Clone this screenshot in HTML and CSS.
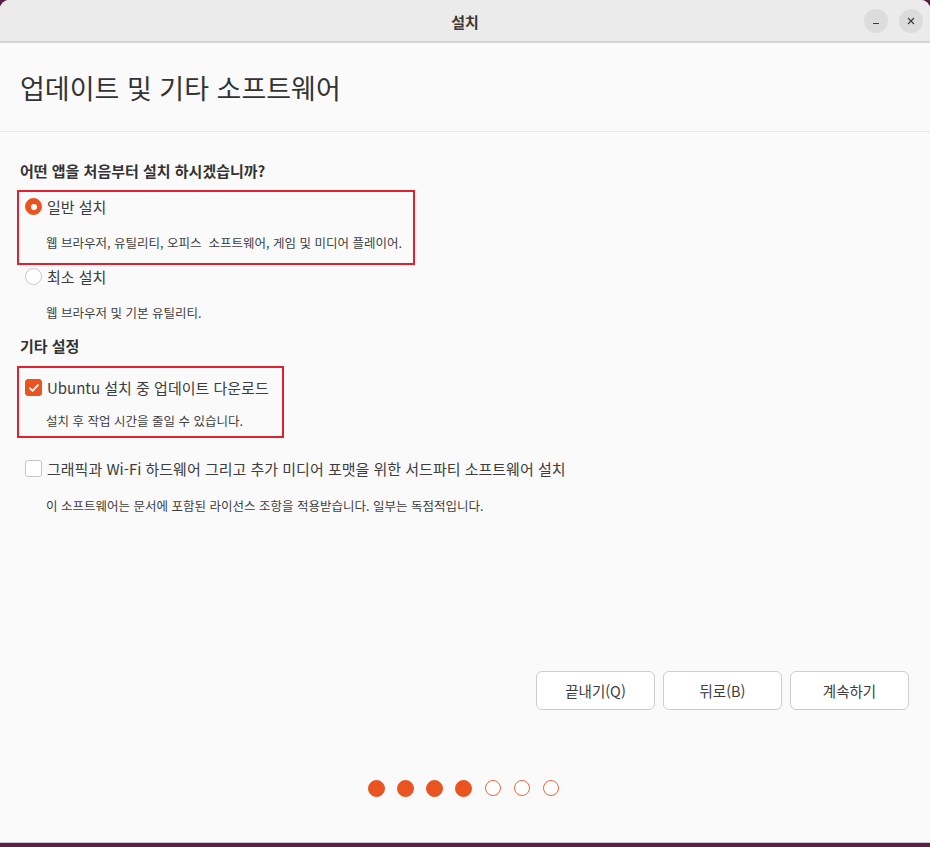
FILE: index.html
```html
<!DOCTYPE html>
<html lang="ko">
<head>
<meta charset="utf-8">
<link rel="stylesheet" href="styles.css">
</head>
<body>
<div class="window">
  <header class="titlebar">
    <span class="title">설치</span>
    <div class="wbtns">
      <span class="wbtn"><svg width="10" height="10" viewBox="0 0 10 10"><path d="M2 7.5h6" stroke="#3d3d3d" stroke-width="1.2"/></svg></span>
      <span class="wbtn"><svg width="10" height="10" viewBox="0 0 10 10"><path d="M2 2l6 6M8 2l-6 6" stroke="#3d3d3d" stroke-width="1.2"/></svg></span>
    </div>
  </header>
  <div class="heading"><h1>업데이트 및 기타 소프트웨어</h1></div>
  <main class="content">
    <h2 class="section first">어떤 앱을 처음부터 설치 하시겠습니까?</h2>
    <div class="option hl hl1">
      <div class="row"><span class="radio on"></span><span class="label">일반 설치</span></div>
      <p class="desc">웹 브라우저, 유틸리티, 오피스&nbsp; 소프트웨어, 게임 및 미디어 플레이어.</p>
    </div>
    <div class="option opt2">
      <div class="row"><span class="radio"></span><span class="label">최소 설치</span></div>
      <p class="desc">웹 브라우저 및 기본 유틸리티.</p>
    </div>
    <h2 class="section second">기타 설정</h2>
    <div class="option hl hl2">
      <div class="row"><span class="check on"><svg width="12" height="12" viewBox="0 0 12 12"><path d="M2 6.3l2.6 2.6L10 3.2" fill="none" stroke="#fff" stroke-width="1.9" stroke-linecap="round" stroke-linejoin="round"/></svg></span><span class="label">Ubuntu 설치 중 업데이트 다운로드</span></div>
      <p class="desc">설치 후 작업 시간을 줄일 수 있습니다.</p>
    </div>
    <div class="option opt4">
      <div class="row"><span class="check"></span><span class="label">그래픽과 Wi-Fi 하드웨어 그리고 추가 미디어 포맷을 위한 서드파티 소프트웨어 설치</span></div>
      <p class="desc">이 소프트웨어는 문서에 포함된 라이선스 조항을 적용받습니다. 일부는 독점적입니다.</p>
    </div>
  </main>
  <div class="actions">
    <button class="btn">끝내기(Q)</button>
    <button class="btn">뒤로(B)</button>
    <button class="btn">계속하기</button>
  </div>
  <div class="dots">
    <span class="dot full"></span><span class="dot full"></span><span class="dot full"></span><span class="dot full"></span><span class="dot"></span><span class="dot"></span><span class="dot"></span>
  </div>
</div>
<div class="desktop-strip"></div>
</body>
</html>
```
FILE: styles.css
```css
html, body {
  margin: 0;
  padding: 0;
  background: #5a1d44;
  width: 930px;
  height: 847px;
  overflow: hidden;
  font-family: "Noto Sans CJK KR", "Noto Sans", sans-serif;
  color: #3d3d3d;
}
.window {
  width: 930px;
  height: 842px;
  background: #fafafa;
  border-radius: 9px 9px 0 0;
  display: flex;
  flex-direction: column;
  border-bottom: 1px solid #c9c2c8;
  overflow: hidden;
}
.desktop-strip {
  height: 4px;
  background: #5c1d46;
}
.titlebar {
  height: 41px;
  background: #ebebeb;
  border-bottom: 2px solid #d4d4d4;
  display: flex;
  align-items: center;
  justify-content: center;
  position: relative;
  flex: none;
}
.title {
  font-size: 15px;
  font-weight: 700;
  color: #3a3a3a;
  margin-top: 1px;
}
.wbtns {
  position: absolute;
  right: 7px;
  top: 9px;
  display: flex;
  gap: 11px;
}
.wbtn {
  width: 24px;
  height: 24px;
  border-radius: 50%;
  background: #dcdcdc;
  display: flex;
  align-items: center;
  justify-content: center;
}
.heading {
  height: 88px;
  border-bottom: 1px solid #e6e6e6;
  display: flex;
  align-items: center;
  padding-left: 20px;
  flex: none;
}
.heading h1 {
  margin: 0;
  font-size: 27px;
  font-weight: 400;
  color: #333;
  margin-top: 0;
}
.content {
  padding: 24px 0 0 17px;
  display: flex;
  flex-direction: column;
  align-items: flex-start;
}
.section {
  margin: 0 0 0 3px;
  font-size: 15px;
  font-weight: 700;
  color: #333;
  line-height: 30px;
}
.section.first { margin-bottom: 4px; }
.section.second { margin-top: 2px; }
.option {
  border: 2px solid transparent;
  padding: 1px 0 0 6px;
  box-sizing: border-box;
}
.hl { border-color: #e2202e; }
.hl1 { width: 398px; height: 75px; }
.opt2 { margin-top: -5px; }
.hl2 { width: 267px; height: 72px; margin-top: 5px; padding-top: 6px; }
.hl2 .desc { margin-top: 10px; }
.opt4 { margin-top: 14px; }
.opt4 .desc { margin-top: 14px; }
.row {
  display: flex;
  align-items: center;
  height: 27px;
  gap: 5px;
}
.label {
  font-size: 15px;
  color: #3d3d3d;
}
.desc {
  margin: 13px 0 4px 0;
  padding-left: 21px;
  font-size: 12.5px;
  color: #3d3d3d;
  line-height: 20px;
}
.radio {
  width: 15px;
  height: 15px;
  border-radius: 50%;
  border: 1px solid #c6c6c6;
  background: #fff;
  box-sizing: content-box;
  flex: none;
}
.radio.on {
  background: #e95420;
  border-color: #e95420;
  position: relative;
}
.radio.on::after {
  content: "";
  position: absolute;
  left: 4.5px;
  top: 4.5px;
  width: 6px;
  height: 6px;
  border-radius: 50%;
  background: #fff;
}
.check {
  width: 15px;
  height: 15px;
  border: 1px solid #c6c6c6;
  border-radius: 3px;
  background: #fff;
  flex: none;
  display: flex;
  align-items: center;
  justify-content: center;
}
.check.on {
  background: #e95420;
  border-color: #e95420;
}
.actions {
  margin-top: auto;
  display: flex;
  justify-content: flex-end;
  gap: 8px;
  padding-right: 21px;
  flex: none;
}
.btn {
  width: 119px;
  height: 39px;
  border: 1px solid #cdcdcd;
  border-radius: 6px;
  background: #fff;
  font-family: "Noto Sans CJK KR", "Noto Sans", sans-serif;
  font-size: 14.5px;
  color: #3d3d3d;
  padding: 0;
}
.dots {
  display: flex;
  justify-content: center;
  gap: 13px;
  margin-top: 70px;
  margin-bottom: 46px;
  flex: none;
  margin-left: -3px;
}
.dot {
  width: 16px;
  height: 16px;
  border-radius: 50%;
  border: 1.5px solid #ea6a3c;
  background: #fff;
  box-sizing: border-box;
}
.dot.full {
  background: #e95420;
  border-color: #e95420;
  width: 17px;
  height: 17px;
  margin: -0.5px;
}
```
